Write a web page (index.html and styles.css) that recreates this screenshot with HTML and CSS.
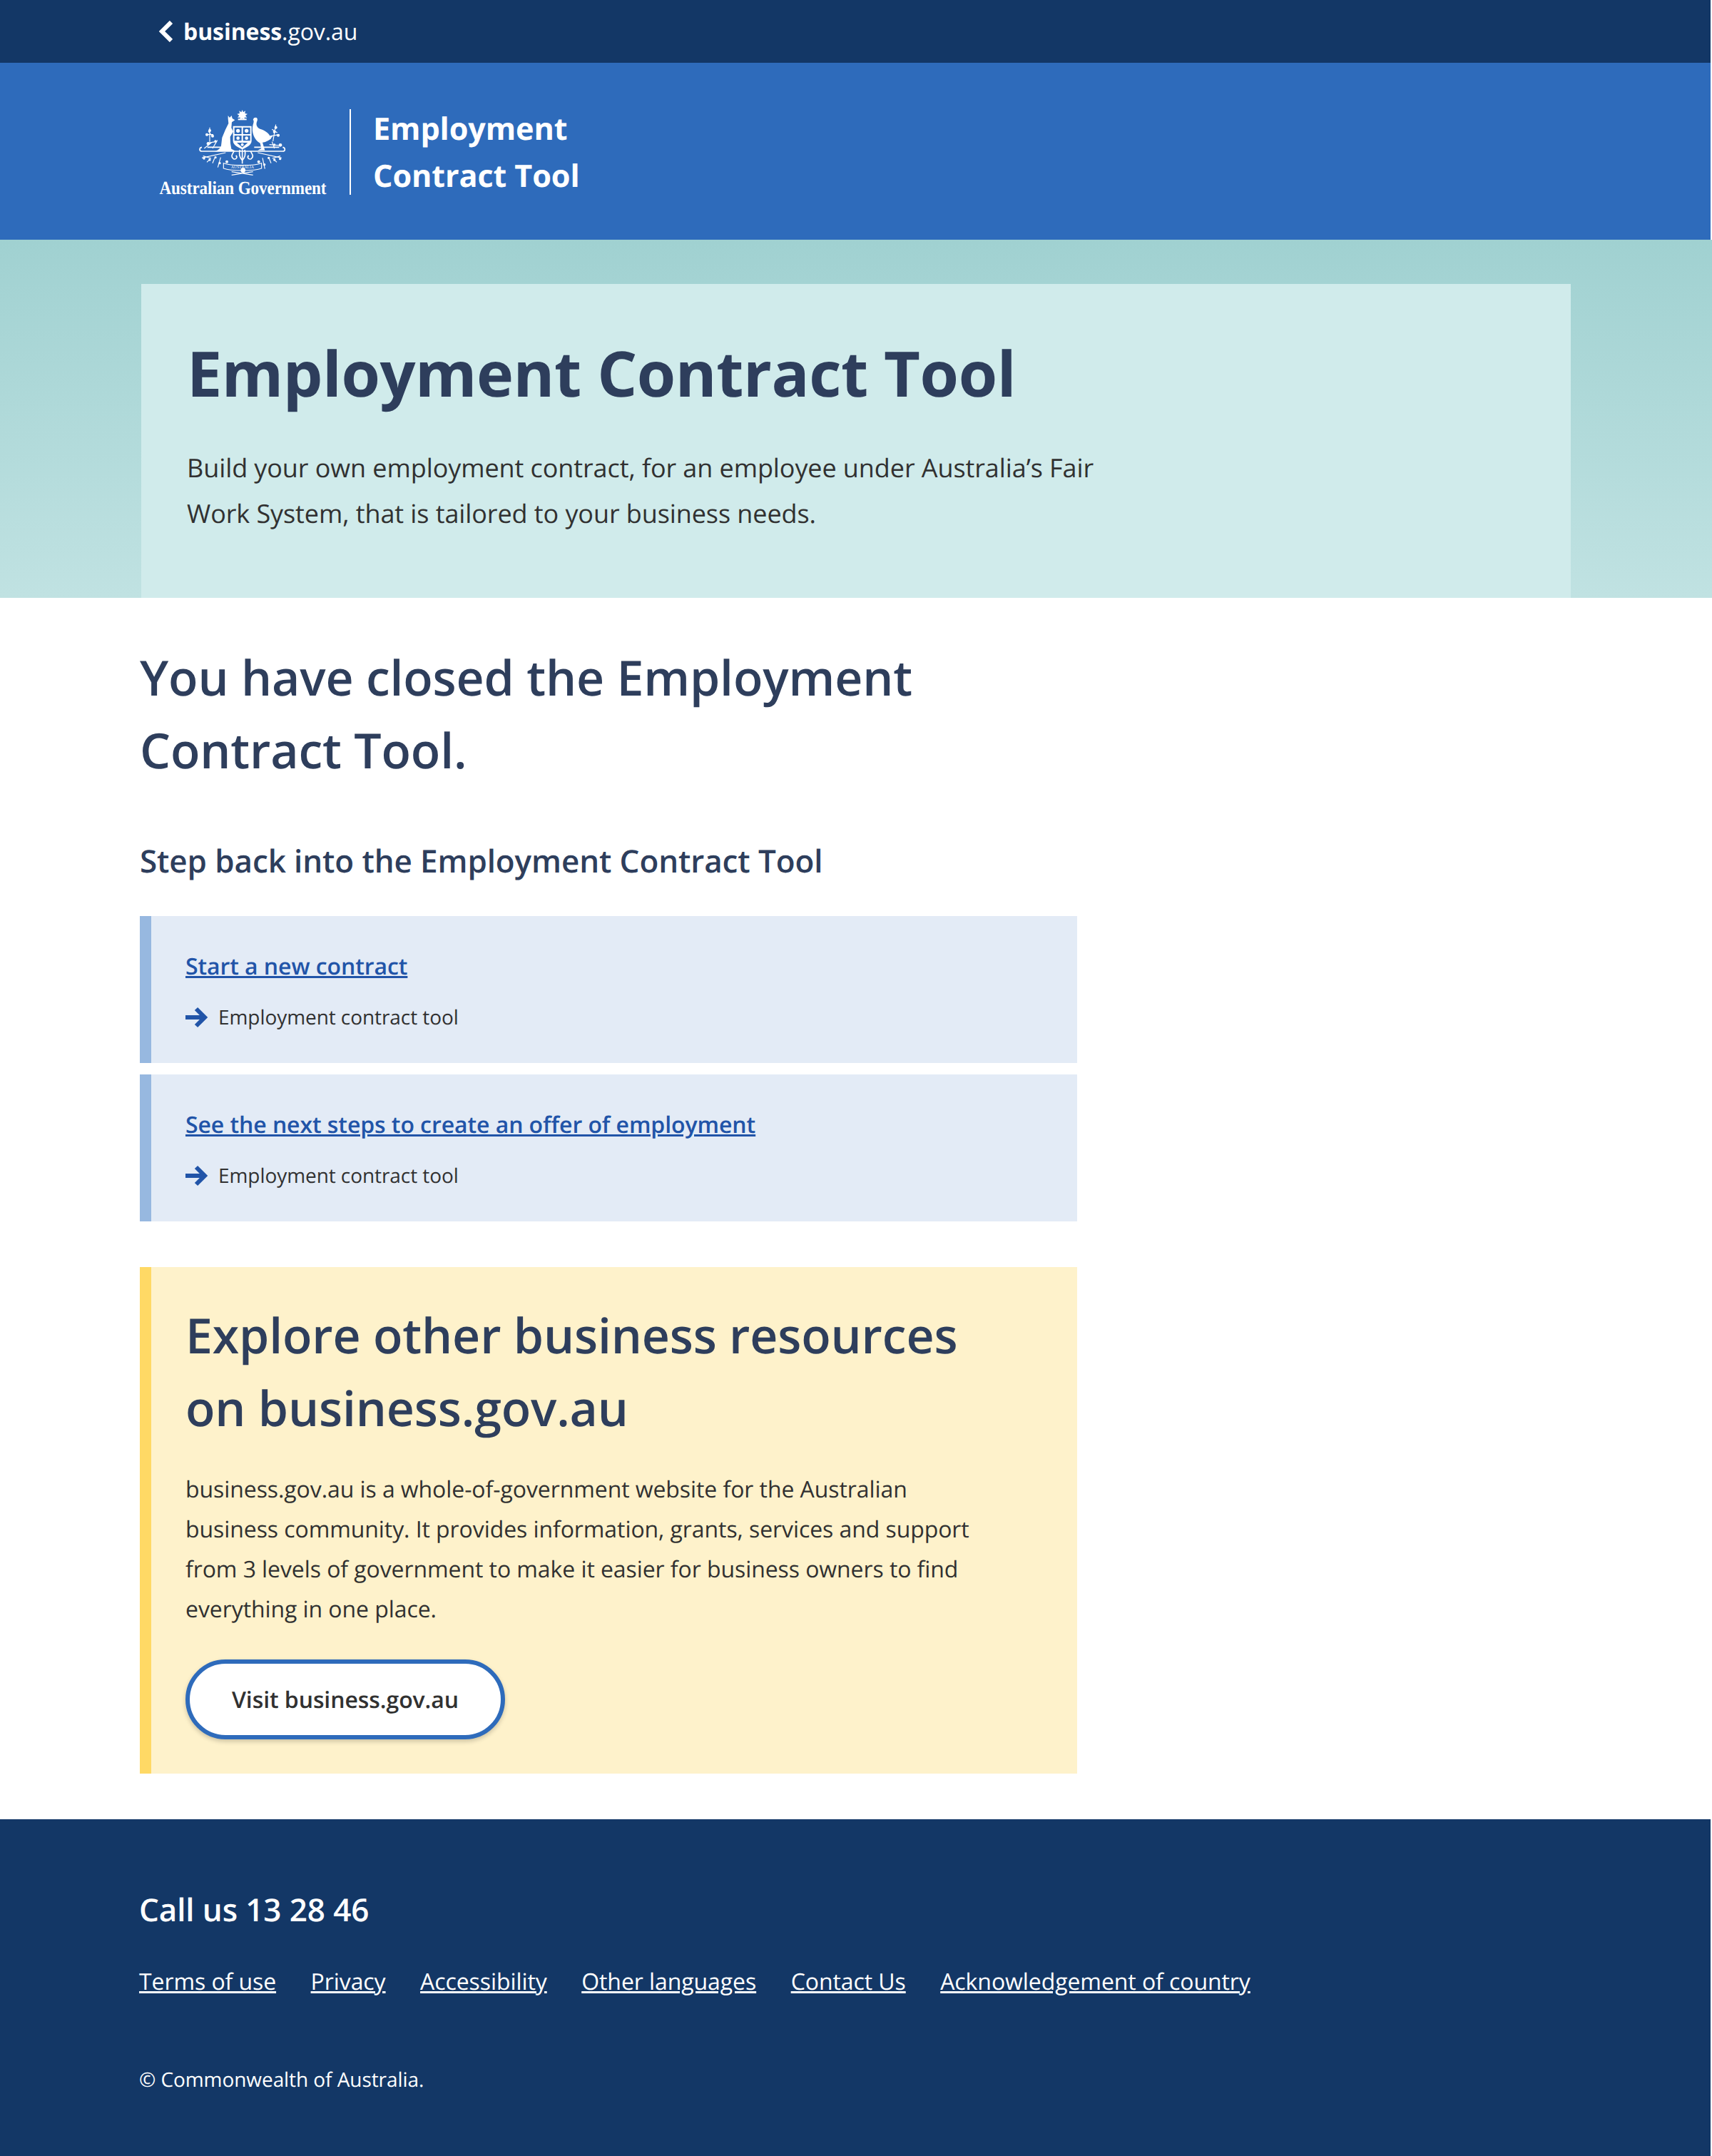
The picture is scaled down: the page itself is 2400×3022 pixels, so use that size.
FILE: index.html
```html
<!DOCTYPE html>
<html lang="en">
<head>
<meta charset="utf-8">
<title>Employment Contract Tool</title>
<link rel="stylesheet" href="styles.css">
</head>
<body>
<div class="topbar">
  <a class="back" href="#">
    <svg class="chev" viewBox="0 0 20 30" width="20" height="30"><path d="M18 2 L5 15 L18 28" fill="none" stroke="#fff" stroke-width="6"/></svg>
    <span><b>business</b>.gov.au</span>
  </a>
</div>
<header class="brand">
  <div class="gov">
    <svg class="crest" viewBox="190 35 375 285" width="125" height="95">
      <g fill="#fff">
        <path d="M375 38l4 10 9-6-2 11 11 2-9 7 7 8-11 0 0 11-9-8-9 8 0-11-11 0 7-8-9-7 11-2-2-11 9 6z"/>
        <path d="M315 62l7 9 8-9 3 12 11 7-13 9-2 24 8 15-13 22 1 27 4 24 18 9h-45l-42 2c14-6 22-12 26-24l4-34 14-34 13-26-2-20z"/>
        <path d="M432 70c8 2 8 10 4 18-4 12 0 24 14 30 25 7 40 22 47 40-12 10-27 17-37 17l10 33h-30l15-8-5-22c-25-13-38-48-30-78 4-10 4-18 0-20l4-8z"/>
        <path d="M336 106h78v62c0 18-20 28-39 36-19-8-39-18-39-36z"/>
        <circle cx="238" cy="125" r="6"/><circle cx="226" cy="142" r="6"/><circle cx="250" cy="148" r="6"/><circle cx="232" cy="180" r="7"/><circle cx="262" cy="170" r="5"/>
        <circle cx="516" cy="112" r="6"/><circle cx="510" cy="130" r="6"/><circle cx="526" cy="145" r="6"/><circle cx="496" cy="150" r="5"/><circle cx="535" cy="186" r="7"/><circle cx="510" cy="185" r="5"/>
        <circle cx="214" cy="242" r="5"/><circle cx="238" cy="248" r="5"/><circle cx="262" cy="238" r="5"/><circle cx="280" cy="262" r="5"/><circle cx="534" cy="244" r="5"/><circle cx="510" cy="248" r="5"/><circle cx="486" cy="240" r="5"/><circle cx="468" cy="268" r="5"/>
        <circle cx="378" cy="292" r="10"/><circle cx="310" cy="256" r="6"/><circle cx="444" cy="256" r="6"/>
      </g>
      <g fill="#2e6bbb">
        <path d="M342 112h30v28h-30zM378 112h30v28h-30zM342 146h30v22h-30zM378 146h30v22h-30z"/>
        <path d="M352 176h46l-23 20z"/>
      </g>
      <g fill="#fff">
        <circle cx="357" cy="126" r="8"/><circle cx="393" cy="126" r="8"/><circle cx="357" cy="157" r="7"/><circle cx="393" cy="157" r="7"/><circle cx="375" cy="184" r="6"/>
        <rect x="357" y="75" width="36" height="6"/>
      </g>
      <g fill="none" stroke="#fff" stroke-width="5">
        <path d="M228 195H320M425 195H530"/>
        <path d="M205 195c-12 2-12 17 0 17H545c12 0 12-15 0-17"/>
        <path d="M375 204v60"/>
        <path d="M340 212c-6 12-16 22-2 32 12 4 18-8 10-14M410 212c6 12 16 22 2 32-12 4-18-8-10-14"/>
        <path d="M375 250c-14-14-14-30-10-44M375 250c14-14 14-30 10-44"/>
      </g>
      <g fill="none" stroke="#fff" stroke-width="3.500">
        <path d="M238 112v60M225 142h28M232 128l20 24M228 178l34-6M215 200l30-24M250 200l20-34"/>
        <path d="M516 100l-12 70M496 148l34-6M500 120l22 14M535 188l-46-4M510 200l-10-28"/>
        <path d="M205 240l100-22M226 258l12-12M250 262l8-20M272 280l12-42M210 232l34 10"/>
        <path d="M540 240l-100-22M520 258l-12-12M496 262l-8-20M470 286l-10-46M535 232l-34 10"/>
        <path d="M296 262c30 12 130 12 160 0l0 22c-30 12-130 12-160 0z"/>
        <path d="M330 312l90-14M330 298l90 14"/>
      </g>
      <text class="motto" x="376" y="283">AUSTRALIA</text>
    </svg>
    <span class="govname">Australian Government</span>
  </div>
  <div class="toolname"><div class="tooltext">Employment<br>Contract Tool</div></div>
</header>
<section class="hero">
  <div class="herocard">
    <h1>Employment Contract Tool</h1>
    <p>Build your own employment contract, for an employee under Australia’s Fair Work System, that is tailored to your business needs.</p>
  </div>
</section>
<main class="main">
  <h2 class="closed">You have closed the Employment Contract Tool.</h2>
  <h3 class="step">Step back into the Employment Contract Tool</h3>
  <div class="cards">
    <div class="linkcard">
      <a href="#">Start a new contract</a>
      <div class="meta">
        <svg viewBox="0 0 32 30" width="32" height="30"><path d="M0 15H28M15 3l12 12-12 12" fill="none" stroke="#2154a8" stroke-width="6"/></svg>
        <span class="label">Employment contract tool</span>
      </div>
    </div>
    <div class="linkcard">
      <a href="#">See the next steps to create an offer of employment</a>
      <div class="meta">
        <svg viewBox="0 0 32 30" width="32" height="30"><path d="M0 15H28M15 3l12 12-12 12" fill="none" stroke="#2154a8" stroke-width="6"/></svg>
        <span class="label">Employment contract tool</span>
      </div>
    </div>
  </div>
  <div class="explore">
    <h2>Explore other business resources on business.gov.au</h2>
    <p>business.gov.au is a whole-of-government website for the Australian business community. It provides information, grants, services and support from 3 levels of government to make it easier for business owners to find everything in one place.</p>
    <a class="btn" href="#">Visit business.gov.au</a>
  </div>
</main>
<footer class="footer">
  <div class="call">Call us 13 28 46</div>
  <nav class="flinks">
    <a href="#">Terms of use</a>
    <a href="#">Privacy</a>
    <a href="#">Accessibility</a>
    <a href="#">Other languages</a>
    <a href="#">Contact Us</a>
    <a href="#">Acknowledgement of country</a>
  </nav>
  <div class="copy">© Commonwealth of Australia.</div>
</footer>
</body>
</html>
```
FILE: styles.css
```css
* { box-sizing: border-box; letter-spacing: -0.0025em; }
html, body { margin: 0; padding: 0; background: #fff; }
body { font-family: "Open Sans", "Noto Sans", sans-serif; color: #313131; text-rendering: geometricPrecision; }
h1, h2, h3, p { margin: 0; }

.topbar { width: 2398px; height: 88px; background: #133766; padding-left: 222px; display: flex; align-items: center; }
.back { display: flex; align-items: center; gap: 15px; color: #fff; text-decoration: none; font-size: 32px; }
.back b { font-weight: 700; }
.chev { display: block; }

.brand { width: 2398px; height: 248px; background: #2e6bbb; padding: 65px 0 0 222px; display: flex; align-items: flex-start; }
.gov { width: 237px; height: 120px; display: flex; flex-direction: column; align-items: center; margin-right: 31px; }
.crest { display: block; flex: none; }
.motto { font-family: "Liberation Serif", serif; font-size: 17px; fill: #fff; text-anchor: middle; }
.govname { font-family: "Liberation Serif", serif; font-weight: 700; font-size: 26px; line-height: 28px; margin-top: 2px; color: #fff; white-space: nowrap; letter-spacing: -0.1px; transform: scaleX(.89); }
.toolname { border-left: 2px solid #fff; height: 120px; padding-left: 31px; color: #fff; font-size: 43.2px; font-weight: 700; line-height: 66px; }
.tooltext { margin-top: -6px; }

.hero { height: 502px; background: linear-gradient(#a0d1d1, #c0e2e2); padding: 62px 198px 0; }
.herocard { height: 440px; background: #d0ebeb; padding: 64px 64px 0; }
.herocard h1 { font-size: 88px; font-weight: 700; line-height: 120px; color: #2e3e5c; letter-spacing: -0.45px; }
.herocard p { font-size: 36px; line-height: 64px; width: 1300px; margin-top: 42px; }

.main { padding: 60px 196px 64px; }
.closed { width: 1200px; font-size: 68px; font-weight: 600; line-height: 102px; color: #2e3e5c; }
.step { font-size: 44px; font-weight: 600; line-height: 64px; color: #2e3e5c; margin-top: 72px; }
.cards { display: flex; flex-direction: column; gap: 16px; width: 1314px; margin-top: 46px; }
.linkcard { height: 206px; background: #e3ebf6; border-left: 16px solid #97b8e0; padding: 46px 0 0 48px; }
.linkcard a { display: block; color: #2154a8; font-size: 32px; font-weight: 600; line-height: 50px; }
.meta { display: flex; align-items: center; gap: 14px; margin-top: 26px; }
.label { font-size: 28px; line-height: 40px; }

.explore { width: 1314px; height: 710px; margin-top: 64px; background: #fef2cb; border-left: 16px solid #ffd965; padding: 44px 48px 0 48px; }
.explore h2 { font-size: 68px; font-weight: 600; line-height: 102px; color: #2e3e5c; width: 1150px; }
.explore p { font-size: 32px; line-height: 56px; margin-top: 36px; width: 1120px; }
.btn { display: flex; align-items: center; justify-content: center; width: 448px; height: 112px; margin-top: 42px; background: #fff; border: 6px solid #2e6bbb; border-radius: 56px; color: #313131; font-size: 32px; font-weight: 600; text-decoration: none; box-shadow: 0 3px 6px rgba(0,0,0,.2); }

.footer { width: 2398px; height: 472px; background: #133766; color: #fff; padding: 96px 195px 0; }
.call { font-size: 44px; font-weight: 600; line-height: 60px; }
.flinks { display: flex; gap: 48.500px; margin-top: 47px; font-size: 32px; line-height: 50px; }
.flinks a { color: #fff; }
.copy { font-size: 28px; line-height: 40px; margin-top: 92px; }
```
